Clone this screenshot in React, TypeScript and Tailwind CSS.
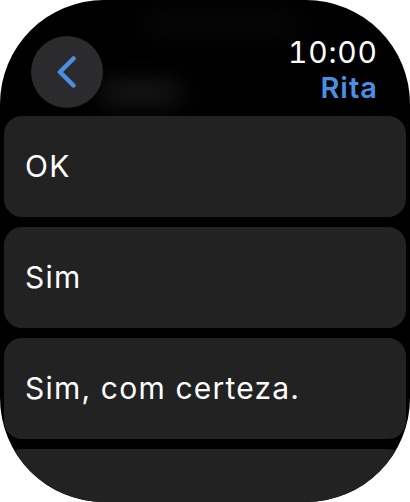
export default function App() {
  const replies = ["OK", "Sim", "Sim, com certeza.", ""];

  return (
    <div
      className="w-[410px] h-[502px] bg-white"
      style={{ fontFamily: "Inter, 'Noto Sans', sans-serif" }}
    >
      <div className="w-full h-full bg-black rounded-[104px] overflow-hidden flex flex-col">
        {/* Header */}
        <div className="relative h-[116px] shrink-0 flex justify-between items-start">
          <div className="absolute left-[100px] top-[86px] w-[80px] h-[14px] rounded-full bg-white/15 blur-md" />
          <div className="absolute left-[140px] top-[18px] w-[160px] h-[12px] rounded-full bg-white/5 blur-md" />
          <button className="relative ml-[31px] mt-[36px] w-[72px] h-[72px] rounded-full bg-[#2b2b2d] flex items-center justify-center">
            <svg width="20" height="32" viewBox="0 0 20 32" fill="none">
              <path
                d="M16.5 2.5 L3 16 L16.5 29.5"
                stroke="#4b8fe3"
                strokeWidth="4.5"
                strokeLinecap="round"
                strokeLinejoin="round"
              />
            </svg>
          </button>
          <div className="relative mr-[33px] mt-[35px] flex flex-col items-end">
            <span className="text-white text-[30px] leading-[34px] tracking-[0.8px] -mr-[0.8px] tabular-nums">10:00</span>
            <span className="text-[#4b8fe3] text-[29px] leading-[38px] font-semibold tracking-[1px] -mr-[1px]">Rita</span>
          </div>
        </div>

        {/* Replies */}
        <div className="flex flex-col gap-[10px] px-[4px]">
          {replies.map((r, i) => (
            <div
              key={i}
              className="h-[101px] shrink-0 rounded-[18px] bg-[#222222] flex items-center px-[21px]"
            >
              <span className="text-white text-[30px] tracking-[1.2px]">{r}</span>
            </div>
          ))}
        </div>
      </div>
    </div>
  );
}
